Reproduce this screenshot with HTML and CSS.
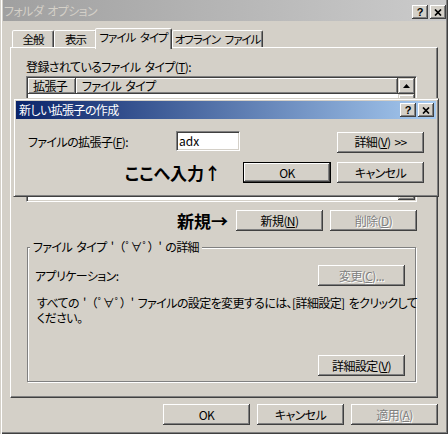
FILE: index.html
```html
<!DOCTYPE html>
<html lang="ja">
<head>
<meta charset="utf-8">
<title>フォルダ オプション</title>
<link rel="stylesheet" href="styles.css">
</head>
<body>
<div class="window">
  <div class="titlebar">
    <span class="title">フォルダ オプション</span>
    <div class="caption-btns">
      <span class="cbtn help">?</span>
      <span class="cbtn"><svg width="8" height="7" viewBox="0 0 8 7"><path d="M1 0.5L7 6.5M7 0.5L1 6.5" stroke="#000" stroke-width="1.7" fill="none"/></svg></span>
    </div>
  </div>
  <div class="content">
    <div class="tabs">
      <div class="tab t1">全般</div>
      <div class="tab t2">表示</div>
      <div class="tab t3 active">ファイル タイプ</div>
      <div class="tab t4">オフライン ファイル</div>
    </div>
    <div class="panel">
      <div class="label">登録されているファイル タイプ(<u>T</u>):</div>
      <div class="list">
        <div class="list-main">
          <div class="list-header">
            <div class="hcell c1">拡張子</div>
            <div class="hcell c2">ファイル タイプ</div>
          </div>
          <div class="list-body"></div>
        </div>
        <div class="vscroll">
          <div class="sbtn"><svg width="7" height="4" viewBox="0 0 7 4"><path d="M0 4L3.5 0L7 4Z" fill="#000"/></svg></div>
          <div class="thumb"></div>
        </div>
      </div>
      <div class="actions">
        <span class="note">新規→</span>
        <div class="btn">新規(<u>N</u>)</div>
        <div class="btn disabled">削除(<u>D</u>)</div>
      </div>
      <div class="group">
        <span class="legend">ファイル タイプ '<span class="face">（ﾟ∀ﾟ）</span>' の詳細</span>
        <div class="app-row">
          <span>アプリケーション:</span>
          <div class="btn disabled">変更(<u>C</u>)...</div>
        </div>
        <div class="desc">
          <div class="line">すべての '<span class="face">（ﾟ∀ﾟ）</span>' ファイルの設定を変更するには、[詳細設定] をクリックして</div>
          <div class="line">ください。</div>
        </div>
        <div class="adv-row">
          <div class="btn">詳細設定(<u>V</u>)</div>
        </div>
      </div>
    </div>
    <div class="footer">
      <div class="btn">OK</div>
      <div class="btn">キャンセル</div>
      <div class="btn disabled">適用(<u>A</u>)</div>
    </div>
  </div>

  <div class="dialog">
    <div class="dlg-title">
      <span>新しい拡張子の作成</span>
      <div class="caption-btns">
        <span class="cbtn help">?</span>
        <span class="cbtn"><svg width="8" height="7" viewBox="0 0 8 7"><path d="M1 0.5L7 6.5M7 0.5L1 6.5" stroke="#000" stroke-width="1.7" fill="none"/></svg></span>
      </div>
    </div>
    <div class="dlg-body">
      <span class="dlg-label">ファイルの拡張子(<u>F</u>):</span>
      <div class="input">adx</div>
      <div class="btn detail">詳細(<u>V</u>) &gt;&gt;</div>
      <span class="note here">ここへ入力↑</span>
      <div class="btn default">OK</div>
      <div class="btn cancel">キャンセル</div>
    </div>
  </div>
</div>
</body>
</html>
```

FILE: styles.css
```css
* {
  box-sizing: border-box;
}

body {
  margin: 0;
  background: #d4d0c8;
  color: #000;
  font-family: "Noto Sans CJK JP", "Noto Sans", sans-serif;
  font-size: 12px;
  line-height: 14px;
  letter-spacing: -0.6px;
  word-spacing: 2px;
  font-feature-settings: "palt" 1;
}

u {
  text-decoration: underline;
  text-underline-offset: 1px;
}

.face {
  font-feature-settings: normal;
  letter-spacing: -1px;
}

.window {
  position: relative;
  width: 448px;
  height: 434px;
  overflow: hidden;
  background: #d4d0c8;
  padding: 0 2px 3px 3px;
  box-shadow: inset 1px 0 #d4d0c8, inset 2px 0 #ffffff, inset -1px -1px #404040, inset -2px -2px #808080;
}

/* title bars */
.titlebar {
  height: 21px;
  display: flex;
  justify-content: space-between;
  align-items: flex-end;
  padding: 0 0 2px 1px;
  background: linear-gradient(to right, #a0a0a0, #cbcbcb);
}

.title {
  color: #d4d0c8;
  align-self: center;
  padding-top: 2px;
}

.caption-btns {
  display: flex;
  gap: 2px;
}

.cbtn {
  width: 16px;
  height: 14px;
  display: flex;
  align-items: center;
  justify-content: center;
  background: #d4d0c8;
  letter-spacing: 0;
  box-shadow: inset -1px -1px #404040, inset 1px 1px #ffffff, inset -2px -2px #808080, inset 2px 2px #d4d0c8;
}

.cbtn.help {
  font-family: "Liberation Sans", Arial, sans-serif;
  font-weight: bold;
  font-size: 11px;
  line-height: 11px;
  color: #000;
}

/* content */
.content {
  padding: 7px 8px 0 7px;
}

.tabs {
  display: flex;
  align-items: flex-end;
  height: 19px;
  margin-left: 2px;
  position: relative;
  z-index: 2;
}

.tab {
  height: 17px;
  padding-top: 1px;
  text-align: center;
  white-space: nowrap;
  font-size: 11.5px;
  letter-spacing: -1px;
  word-spacing: 3px;
  background: #d4d0c8;
  border: 1px solid;
  border-bottom: 0;
  border-color: #ffffff #404040 transparent #ffffff;
  border-radius: 2px 2px 0 0;
  box-shadow: inset -1px 0 #808080;
}

.t1 { width: 42px; }
.t2 { width: 43px; }
.t3 {
  width: 77px;
  height: 21px;
  margin: 0 0 -2px -2px;
  position: relative;
  z-index: 3;
}
.t4 { width: 91px; }

.panel {
  height: 351px;
  border: 1px solid;
  border-color: #ffffff #404040 #404040 #ffffff;
  box-shadow: inset -1px -1px #808080;
  padding: 12px 20px 0 15px;
}

.label {
  height: 14px;
  white-space: nowrap;
}

.list {
  margin-top: 2px;
  height: 126px;
  display: flex;
  padding: 1px;
  background: #ffffff;
  border: 1px solid;
  border-color: #808080 #ffffff #ffffff #808080;
  box-shadow: inset 1px 1px #404040, inset -1px -1px #d4d0c8;
}

.list-main {
  flex: 1;
  display: flex;
  flex-direction: column;
}

.list-header {
  display: flex;
  height: 16px;
}

.hcell {
  background: #d4d0c8;
  line-height: 15px;
  white-space: nowrap;
  box-shadow: inset -1px -1px #404040, inset 1px 1px #ffffff, inset -2px -2px #808080;
}

.c1 { width: 48px; padding-left: 5px; }
.c2 { flex: 1; padding-left: 6px; }

.list-body {
  flex: 1;
  background: #ffffff;
}

.vscroll {
  width: 17px;
  display: flex;
  flex-direction: column;
  background: #ebe9e5;
}

.sbtn {
  height: 16px;
  display: flex;
  align-items: center;
  justify-content: center;
  background: #d4d0c8;
  box-shadow: inset -1px -1px #404040, inset 1px 1px #d4d0c8, inset -2px -2px #808080, inset 2px 2px #ffffff;
}

.thumb {
  flex: 1;
  background: #d4d0c8;
  box-shadow: inset -1px -1px #404040, inset 1px 1px #d4d0c8, inset -2px -2px #808080, inset 2px 2px #ffffff;
}

.actions {
  margin-top: 8px;
  height: 21px;
  display: flex;
  justify-content: flex-end;
  align-items: center;
  gap: 7px;
}

.note {
  font-size: 17px;
  line-height: 19px;
  font-weight: bold;
  letter-spacing: 0;
  white-space: nowrap;
}

.actions .note {
  margin-right: 1px;
}

.btn {
  width: 87px;
  height: 21px;
  display: flex;
  align-items: center;
  justify-content: center;
  white-space: nowrap;
  background: #d4d0c8;
  box-shadow: inset -1px -1px #404040, inset 1px 1px #ffffff, inset -2px -2px #808080, inset 2px 2px #d4d0c8;
}

.btn.disabled {
  color: #808080;
  text-shadow: 1px 1px 0 #ffffff;
}

.btn.default {
  width: 88px;
  border: 1px solid #000000;
}

/* group box */
.group {
  position: relative;
  margin: 16px 0 0 1px;
  width: 389px;
  border: 1px solid #808080;
  box-shadow: inset 1px 1px #ffffff, 1px 1px #ffffff;
  padding: 17px 10px 5px 7px;
}

.legend {
  position: absolute;
  top: -8px;
  left: 2px;
  padding: 0 3px;
  line-height: 14px;
  background: #d4d0c8;
  white-space: nowrap;
}

.app-row {
  height: 21px;
  display: flex;
  justify-content: space-between;
  align-items: center;
}

.desc {
  margin: 9px 0 0 2px;
}

.line {
  height: 15px;
  line-height: 15px;
  white-space: nowrap;
}

.adv-row {
  margin-top: 30px;
  display: flex;
  justify-content: flex-end;
}

.footer {
  margin-top: 6px;
  display: flex;
  justify-content: flex-end;
  gap: 7px;
}

/* floating sub dialog */
.dialog {
  position: absolute;
  left: 13px;
  top: 98px;
  width: 426px;
  height: 99px;
  z-index: 5;
  padding: 2px;
  background: #d4d0c8;
  border: 1px solid;
  border-color: #d4d0c8 #404040 #404040 #d4d0c8;
  box-shadow: inset 1px 1px #ffffff, inset -1px -1px #808080;
}

.dlg-title {
  height: 18px;
  display: flex;
  justify-content: space-between;
  align-items: center;
  padding: 0 2px 0 3px;
  color: #ffffff;
  background: linear-gradient(to right, #0a246a, #a6caf0);
}

.dlg-body {
  display: grid;
  grid-template-columns: 148px 67px 94px 87px;
  grid-template-rows: 21px 21px;
  row-gap: 10px;
  align-items: center;
  padding: 12px 0 0 12px;
}

.dlg-label {
  white-space: nowrap;
}

.input {
  align-self: start;
  width: 64px;
  height: 20px;
  padding: 2px 0 0 2px;
  background: #ffffff;
  letter-spacing: 0;
  border: 1px solid;
  border-color: #808080 #ffffff #ffffff #808080;
  box-shadow: inset 1px 1px #404040, inset -1px -1px #d4d0c8;
  line-height: 14px;
}

.detail {
  grid-column: 4;
  margin-top: 1px;
}

.here {
  grid-column: 1 / 3;
  justify-self: end;
  margin-right: 22px;
}

.dlg-body .default {
  grid-column: 3;
}

.cancel {
  grid-column: 4;
}
```
